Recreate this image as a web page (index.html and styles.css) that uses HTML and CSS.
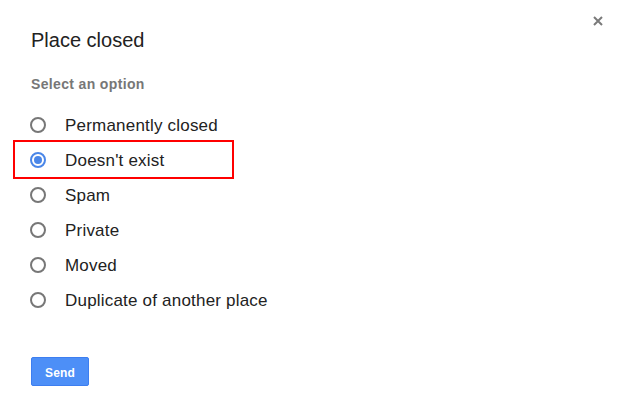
FILE: index.html
```html
<!DOCTYPE html>
<html>
<head>
<meta charset="utf-8">
<link rel="stylesheet" href="styles.css">
</head>
<body>
<div class="dialog">
  <button class="close" aria-label="Close">
    <svg width="10" height="10" viewBox="0 0 10 10"><path d="M1 1L9 9M9 1L1 9" stroke="#7a7a7a" stroke-width="2" fill="none"/></svg>
  </button>
  <h1 class="title">Place closed</h1>
  <div class="subtitle">Select an option</div>
  <div class="options">
    <label class="row"><span class="radio"></span><span class="label">Permanently closed</span></label>
    <label class="row highlight"><span class="radio checked"></span><span class="label">Doesn't exist</span></label>
    <label class="row"><span class="radio"></span><span class="label">Spam</span></label>
    <label class="row"><span class="radio"></span><span class="label">Private</span></label>
    <label class="row"><span class="radio"></span><span class="label">Moved</span></label>
    <label class="row"><span class="radio"></span><span class="label">Duplicate of another place</span></label>
  </div>
  <button class="send">Send</button>
</div>
</body>
</html>
```
FILE: styles.css
```css
html, body {
  margin: 0;
  padding: 0;
  background: #fff;
}
body {
  font-family: "Liberation Sans", Arial, sans-serif;
  color: #222;
}
.dialog {
  position: relative;
  width: 620px;
  height: 416px;
  box-sizing: border-box;
  padding: 28px 0 0 31px;
  display: flex;
  flex-direction: column;
  align-items: flex-start;
}
.close {
  position: absolute;
  top: 16px;
  right: 17px;
  width: 10px;
  height: 10px;
  padding: 0;
  border: 0;
  background: none;
  display: flex;
}
.title {
  margin: 0;
  font-size: 20px;
  line-height: 24px;
  font-weight: normal;
  color: #222;
}
.subtitle {
  margin-top: 24px;
  font-size: 14px;
  line-height: 16px;
  font-weight: bold;
  color: #777;
  letter-spacing: 0.35px;
}
.options {
  margin-top: 16px;
  display: flex;
  flex-direction: column;
}
.row {
  position: relative;
  height: 35px;
  display: flex;
  align-items: center;
}
.row.highlight::after {
  content: "";
  position: absolute;
  left: -18px;
  top: -3px;
  width: 217px;
  height: 35px;
  border: 2px solid #f00;
}
.radio {
  width: 16px;
  height: 16px;
  box-sizing: border-box;
  border: 2px solid #777;
  border-radius: 50%;
  margin-left: -1px;
  margin-top: -2px;
  display: flex;
  align-items: center;
  justify-content: center;
}
.radio.checked {
  border-color: #4a86e8;
}
.radio.checked::before {
  content: "";
  width: 8px;
  height: 8px;
  border-radius: 50%;
  background: #4a86e8;
}
.label {
  margin-left: 19px;
  font-size: 17px;
  line-height: 35px;
  color: #222;
  letter-spacing: 0.2px;
}
.send {
  margin-top: 39px;
  width: 58px;
  height: 29px;
  padding: 2px 0 0;
  border: 1px solid #3d7ef0;
  border-radius: 2px;
  background: #4d8ff7;
  color: #fff;
  font-family: "Liberation Sans", Arial, sans-serif;
  font-size: 12px;
  font-weight: bold;
  letter-spacing: 0.2px;
}
```
